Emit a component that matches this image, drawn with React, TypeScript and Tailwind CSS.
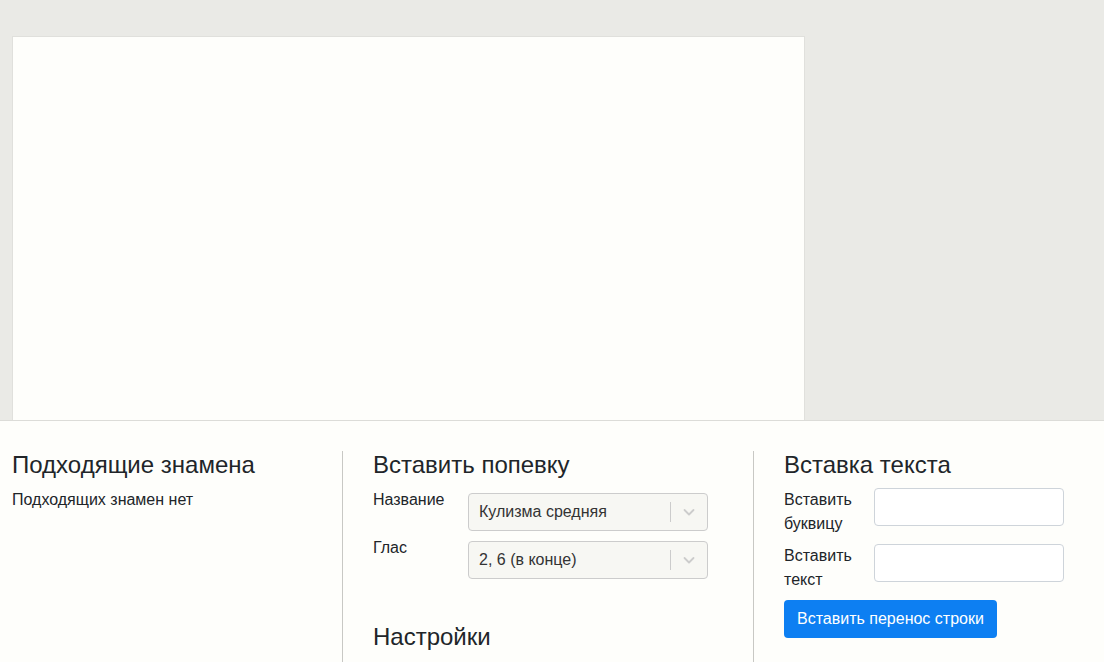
import React from 'react';

const font = { fontFamily: '"Liberation Sans", Arial, sans-serif' };

const Chevron: React.FC = () => (
    <svg width="20" height="20" viewBox="0 0 20 20" className="text-[#cccccc]">
        <path d="M5.5 8 L10 12.5 L14.5 8" fill="none" stroke="currentColor" strokeWidth="1.8" strokeLinecap="round" strokeLinejoin="round" />
    </svg>
);

// Select box look-alike, disabled style
const SelectBox: React.FC<{ value: string }> = ({ value }) => (
    <div className="mt-[5px] w-[240px] h-[38px] rounded-[4px] border border-[#cccccc] bg-[#f7f7f3] flex items-center">
        <span className="flex-1 pl-[10px] text-base text-[#333333]">{value}</span>
        <span className="w-px h-[20px] bg-[#cccccc]" />
        <span className="w-[36px] flex items-center justify-center"><Chevron /></span>
    </div>
);

const TextRow: React.FC<{ label: string }> = ({ label }) => (
    <div className="flex items-start">
        <label className="w-[90px] text-base leading-6 pr-2">{label}</label>
        <input className="w-[190px] h-[38px] rounded-[4px] border border-[#ced4da] bg-white outline-none" />
    </div>
);

export default function App() {
    return (
        <div className="w-[1104px] h-[662px] overflow-hidden bg-[#eaeae6] flex flex-col text-[#212529]" style={font}>
            <div className="h-[420px] shrink-0 pt-[36px] pl-[12px]">
                <div className="w-[793px] h-[384px] bg-[#fefefb] border border-b-0 border-[#e0e0dc]" />
            </div>

            <div className="flex-1 bg-[#fefefb] border-t border-[#dcdcd8] flex pt-[30px]">
                <div className="w-[342px] pl-[12px]">
                    <h4 className="text-2xl leading-[1.2] mb-[8px]">Подходящие знамена</h4>
                    <p className="text-base leading-6">Подходящих знамен нет</p>
                </div>

                <div className="w-[411px] border-l border-[#c8c8c4] pl-[30px]">
                    <h4 className="text-2xl leading-[1.2] mb-[8px]">Вставить попевку</h4>
                    <div className="flex items-start">
                        <label className="w-[95px] text-base leading-6">Название</label>
                        <SelectBox value="Кулизма средняя" />
                    </div>
                    <div className="flex items-start mt-[5px]">
                        <label className="w-[95px] text-base leading-6">Глас</label>
                        <SelectBox value="2, 6 (в конце)" />
                    </div>
                    <h4 className="text-2xl leading-[1.2] mt-[44px]">Настройки</h4>
                </div>

                <div className="flex-1 border-l border-[#c8c8c4] pl-[30px]">
                    <h4 className="text-2xl leading-[1.2] mb-[8px]">Вставка текста</h4>
                    <div className="flex flex-col gap-[8px]">
                        <TextRow label="Вставить буквицу" />
                        <TextRow label="Вставить текст" />
                    </div>
                    <button className="mt-[8px] h-[38px] px-[13px] rounded-[4px] bg-[#0d7ff2] text-white text-base">
                        Вставить перенос строки
                    </button>
                </div>
            </div>
        </div>
    );
}
